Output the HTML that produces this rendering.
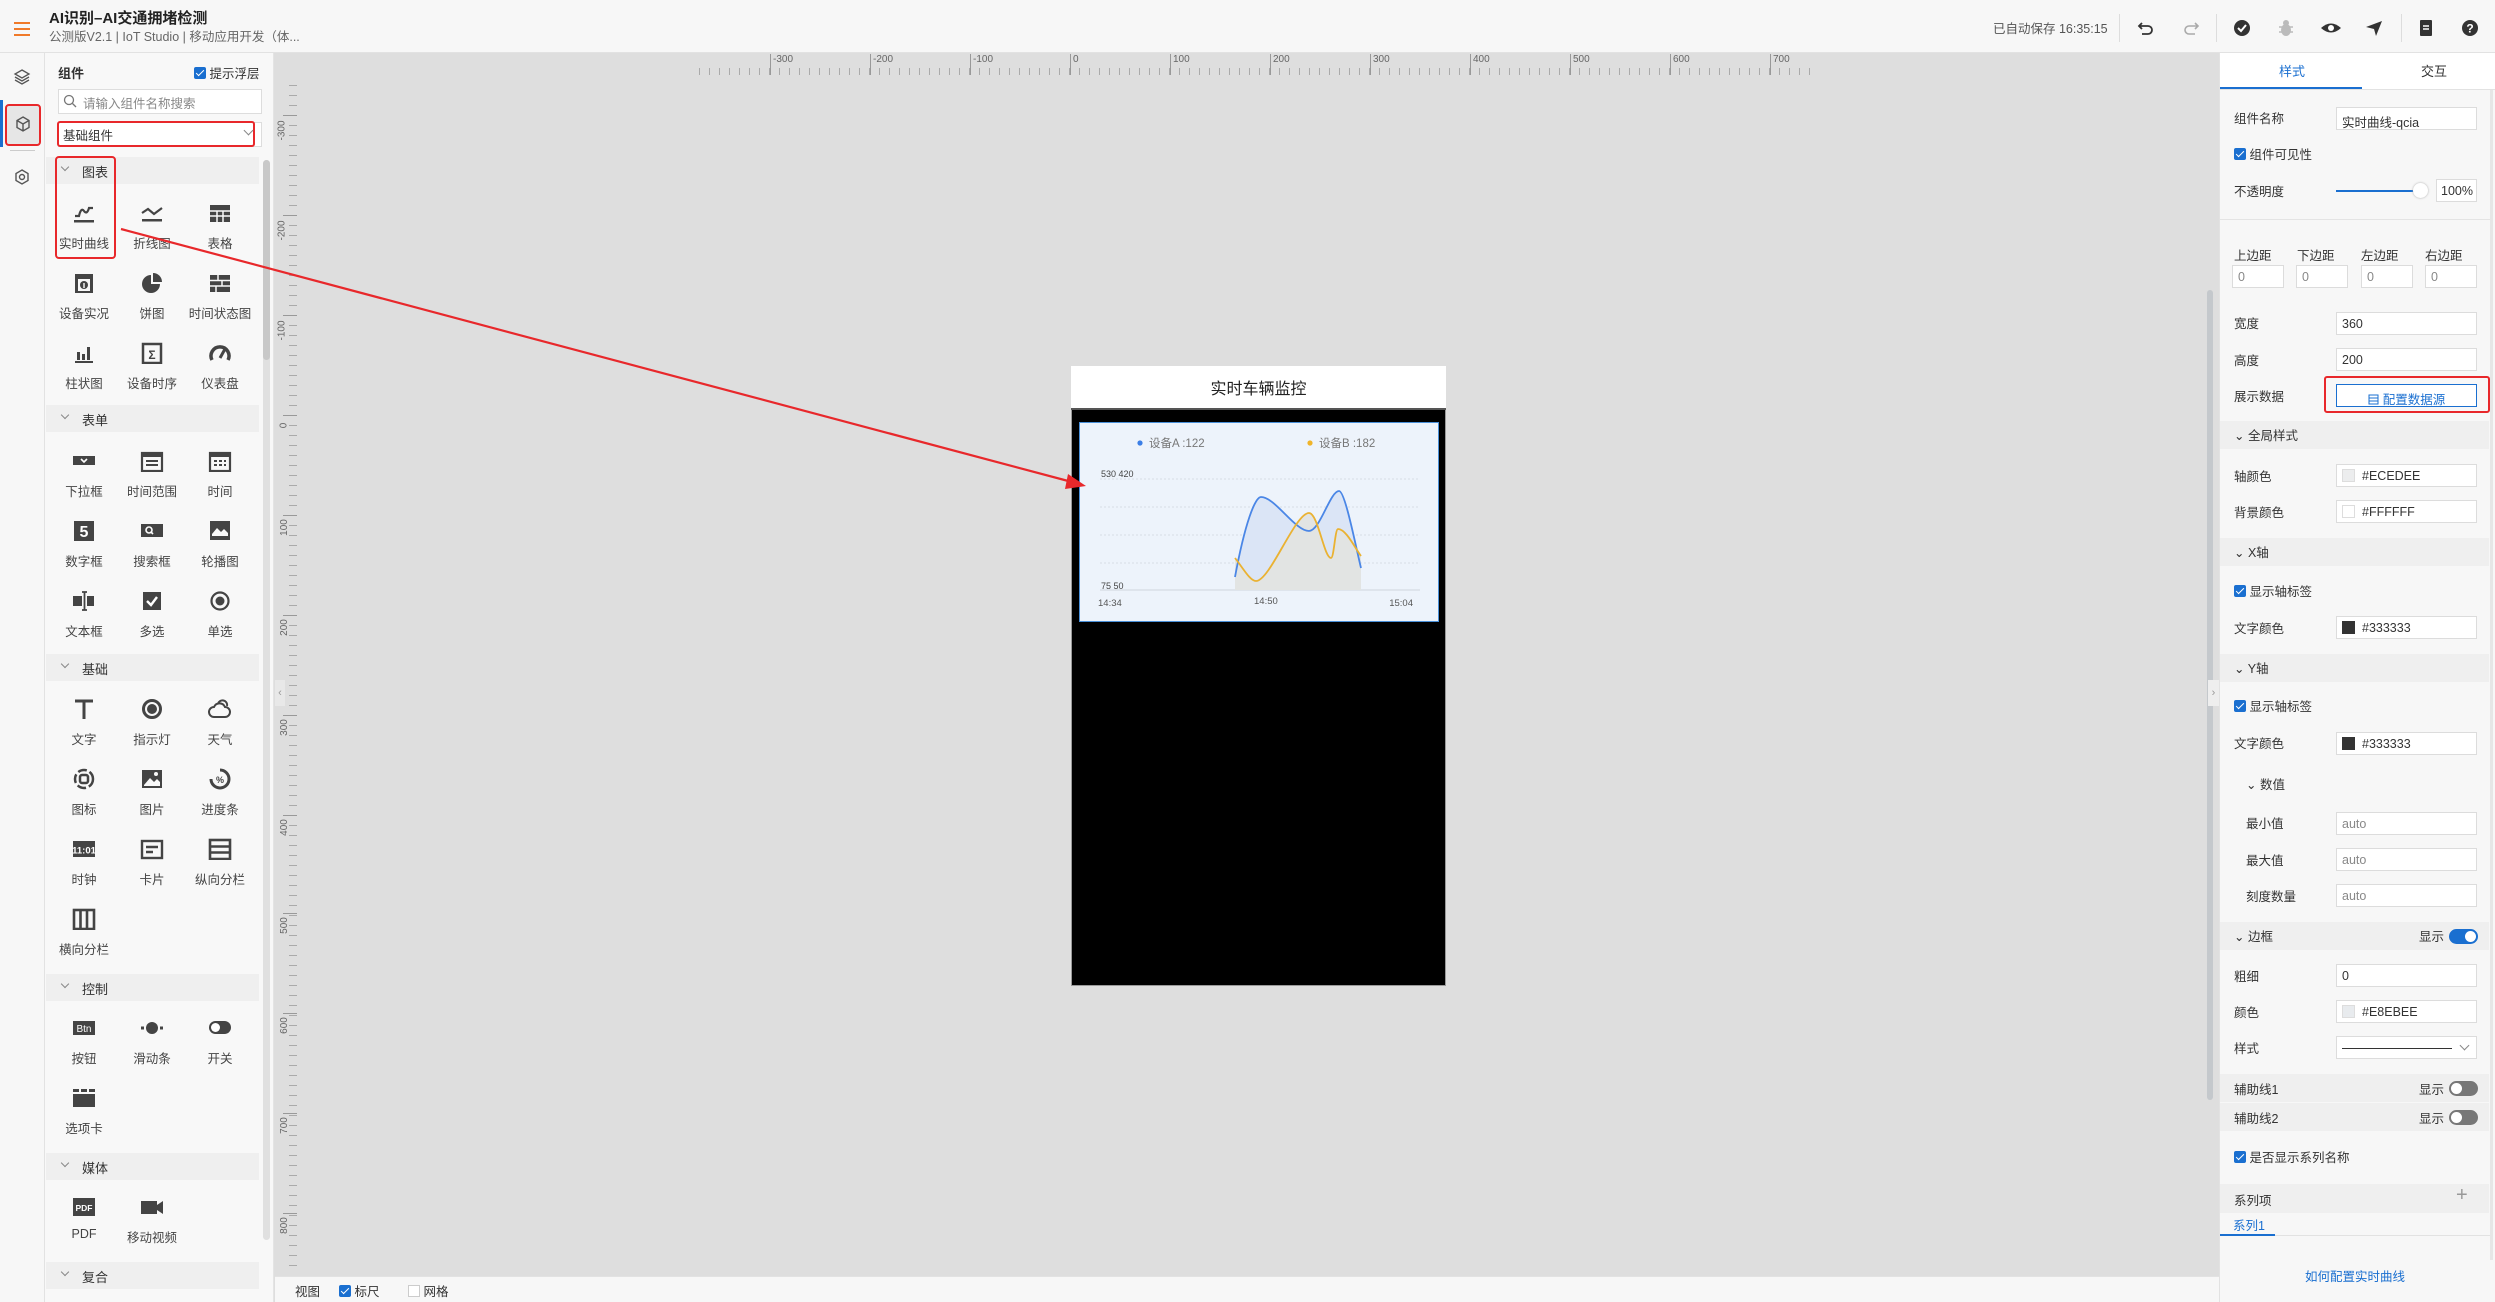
<!DOCTYPE html>
<html><head><meta charset="utf-8">
<style>
*{box-sizing:border-box;margin:0;padding:0}
body{width:2495px;height:1302px;overflow:hidden;background:#dedede;font-family:"Liberation Sans","Noto Sans CJK SC",sans-serif;color:#333;position:relative}
.a{position:absolute}
.t{position:absolute;white-space:nowrap}
.top{left:0;top:0;width:2495px;height:53px;background:#f7f7f7;border-bottom:1px solid #e2e2e2}
.rail{left:0;top:53px;width:45px;height:1249px;background:#f7f7f7;border-right:1px solid #e2e2e2}
.panel{left:45px;top:53px;width:229px;height:1249px;background:#f8f8f8;border-right:1px solid #e4e4e4}
.sec{left:46px;width:213px;height:27px;background:#efefef;font-size:13px;color:#333}
.sec span{position:absolute;left:36px;top:5px}
.chev{position:absolute;width:7px;height:7px;border-right:1px solid #888;border-bottom:1px solid #888;transform:rotate(45deg)}
.item{position:absolute;width:70px;text-align:center;font-size:12.5px;color:#444}
.item .ic{position:relative;height:28px;margin:0 auto 6px;display:flex;align-items:center;justify-content:center}
.right{left:2219px;top:53px;width:276px;height:1249px;background:#f7f7f7;border-left:1px solid #e2e2e2}
.lbl{position:absolute;left:2234px;font-size:12.5px;color:#333;white-space:nowrap;transform:translateY(-2px)}
.inp{position:absolute;left:2336px;width:141px;height:23px;background:#fff;border:1px solid #dcdcdc;font-size:12.5px;padding:4px 5px;color:#333;white-space:nowrap}
.rsec{position:absolute;left:2220px;width:269px;height:28px;background:#efefef;font-size:12.5px}
.cb{display:inline-block;width:12px;height:12px;background:#1a6fd0;border-radius:2px;position:relative;vertical-align:-1px}
.cb:after{content:"";position:absolute;left:4px;top:1px;width:3px;height:7px;border-right:1.6px solid #fff;border-bottom:1.6px solid #fff;transform:rotate(45deg)}
.sw{display:inline-block;width:13px;height:13px;vertical-align:-2px;margin-right:7px;border:1px solid #ddd}
.rl{font-size:10px;color:#666}
</style></head><body>

<div class="a top"></div>
<div class="a" style="left:14px;top:22px;width:16px;height:2px;background:#f07a2a"></div>
<div class="a" style="left:14px;top:28px;width:16px;height:2px;background:#f07a2a"></div>
<div class="a" style="left:14px;top:34px;width:16px;height:2px;background:#f07a2a"></div>
<div class="t" style="left:49px;top:7px;font-size:15px;font-weight:bold;color:#222">AI识别–AI交通拥堵检测</div>
<div class="t" style="left:49px;top:26px;font-size:12.5px;color:#666">公测版V2.1 | IoT Studio | 移动应用开发（体...</div>
<div class="t" style="left:1993px;top:18px;font-size:12.5px;color:#555">已自动保存 16:35:15</div>
<div class="a" style="left:2119px;top:14px;width:1px;height:28px;background:#ddd"></div>
<div class="a" style="left:2216px;top:14px;width:1px;height:28px;background:#ddd"></div>
<div class="a" style="left:2401px;top:14px;width:1px;height:28px;background:#ddd"></div>
<svg class="a" style="left:2136px;top:18px" width="20" height="20" viewBox="0 0 20 20"><path d="M6 5 L3 8 L6 11 M3 8 H12 a4 4 0 0 1 0 8 H6" fill="none" stroke="#333" stroke-width="1.8"/></svg>
<svg class="a" style="left:2181px;top:18px" width="20" height="20" viewBox="0 0 20 20"><path d="M14 5 L17 8 L14 11 M17 8 H8 a4 4 0 0 0 0 8 H14" fill="none" stroke="#aaa" stroke-width="1.6"/></svg>
<svg class="a" style="left:2232px;top:18px" width="20" height="20" viewBox="0 0 20 20"><circle cx="10" cy="10" r="8" fill="#333"/><path d="M6 10 L9 13 L14 7" fill="none" stroke="#fff" stroke-width="2"/></svg>
<svg class="a" style="left:2276px;top:18px" width="20" height="20" viewBox="0 0 20 20"><ellipse cx="10" cy="12" rx="5" ry="6" fill="#bbb"/><circle cx="10" cy="5" r="3" fill="#bbb"/><path d="M3 9h14M3 14h14" stroke="#bbb" stroke-width="1.5"/></svg>
<svg class="a" style="left:2320px;top:18px" width="22" height="20" viewBox="0 0 22 20"><path d="M1 10 Q11 1 21 10 Q11 19 1 10Z" fill="#333"/><circle cx="11" cy="10" r="3" fill="#fff"/></svg>
<svg class="a" style="left:2364px;top:18px" width="20" height="20" viewBox="0 0 20 20"><path d="M2 9 L18 3 L12 18 L10 11Z" fill="#333"/></svg>
<svg class="a" style="left:2416px;top:18px" width="20" height="20" viewBox="0 0 20 20"><rect x="4" y="2" width="12" height="16" rx="1" fill="#333"/><path d="M7 8h6M7 11h6" stroke="#fff" stroke-width="1.5"/></svg>
<svg class="a" style="left:2460px;top:18px" width="20" height="20" viewBox="0 0 20 20"><circle cx="10" cy="10" r="8" fill="#333"/><text x="10" y="14.5" text-anchor="middle" font-size="12" font-weight="bold" fill="#fff" font-family="Liberation Sans">?</text></svg>

<div class="a rail"></div>
<div class="a" style="left:0;top:100px;width:3px;height:47px;background:#1a6fd0"></div>
<div class="a" style="left:5px;top:104px;width:36px;height:42px;background:#e6e6e6;border:2px solid #e8282b;border-radius:4px"></div>
<div class="a" style="left:10px;top:150px;width:25px;height:1px;background:#ccc"></div>
<svg class="a" style="left:13px;top:68px" width="18" height="18" viewBox="0 0 18 18"><path d="M9 2 L16 6 L9 10 L2 6Z M2 9 L9 13 L16 9 M2 12 L9 16 L16 12" fill="none" stroke="#555" stroke-width="1.3"/></svg>
<svg class="a" style="left:14px;top:115px" width="18" height="18" viewBox="0 0 18 18"><path d="M9 2 L15 5.5 V12.5 L9 16 L3 12.5 V5.5Z M3 5.5 L9 9 L15 5.5 M9 9 V16" fill="none" stroke="#555" stroke-width="1.4"/></svg>
<svg class="a" style="left:13px;top:168px" width="18" height="18" viewBox="0 0 18 18"><path d="M9 2 L15 5.5 V12.5 L9 16 L3 12.5 V5.5Z" fill="none" stroke="#555" stroke-width="1.4"/><circle cx="9" cy="9" r="2.5" fill="none" stroke="#555" stroke-width="1.4"/></svg>

<div class="a panel"></div>
<div class="t" style="left:58px;top:63px;font-size:13px;font-weight:bold">组件</div>
<div class="t" style="left:194px;top:63px;font-size:12.5px"><span class="cb"></span> 提示浮层</div>
<div class="a" style="left:58px;top:89px;width:204px;height:25px;background:#fff;border:1px solid #ddd"></div>
<svg class="a" style="left:63px;top:94px" width="14" height="14" viewBox="0 0 14 14"><circle cx="6" cy="6" r="4.5" fill="none" stroke="#777" stroke-width="1.3"/><path d="M9.5 9.5 L13 13" stroke="#777" stroke-width="1.3"/></svg>
<div class="t" style="left:83px;top:93px;font-size:12.5px;color:#888">请输入组件名称搜索</div>
<div class="a" style="left:58px;top:122px;width:204px;height:25px;background:#fff;border:1px solid #ddd"></div>
<div class="a" style="left:57px;top:121px;width:198px;height:26px;border:2px solid #e8282b;border-radius:3px"></div>
<div class="t" style="left:63px;top:125px;font-size:12.5px">基础组件</div>
<div class="chev" style="left:245px;top:127px"></div>
<div class="a" style="left:263px;top:160px;width:7px;height:1080px;background:#e0e0e0;border-radius:4px"></div>
<div class="a" style="left:263px;top:160px;width:7px;height:200px;background:#c8c8c8;border-radius:4px"></div>

<div class="a sec" style="top:157px"><div class="chev" style="left:16px;top:7px;width:6px;height:6px"></div><span>图表</span></div>
<div class="a sec" style="top:405px"><div class="chev" style="left:16px;top:7px;width:6px;height:6px"></div><span>表单</span></div>
<div class="a sec" style="top:654px"><div class="chev" style="left:16px;top:7px;width:6px;height:6px"></div><span>基础</span></div>
<div class="a sec" style="top:974px"><div class="chev" style="left:16px;top:7px;width:6px;height:6px"></div><span>控制</span></div>
<div class="a sec" style="top:1153px"><div class="chev" style="left:16px;top:7px;width:6px;height:6px"></div><span>媒体</span></div>
<div class="a sec" style="top:1262px"><div class="chev" style="left:16px;top:7px;width:6px;height:6px"></div><span>复合</span></div>

<div class="a" style="left:55px;top:156px;width:61px;height:103px;border:2px solid #e8282b;border-radius:4px"></div>

<div class="item" style="left:49px;top:199px"><div class="ic"><svg width="24" height="22"><path d="M3 14 h4 q2 -9 5 -5 q3 4 5 -3 h4" fill="none" stroke="#444" stroke-width="2.2"/><rect x="2" y="18" width="20" height="2.5" fill="#444"/></svg></div>实时曲线</div>
<div class="item" style="left:117px;top:199px"><div class="ic"><svg width="24" height="22"><path d="M2 11 L8 7 L14 12 L22 6" fill="none" stroke="#444" stroke-width="2.2"/><rect x="2" y="17" width="20" height="2.5" fill="#444"/></svg></div>折线图</div>
<div class="item" style="left:185px;top:199px"><div class="ic"><svg width="24" height="22"><rect x="2" y="3" width="20" height="17" fill="#444"/><path d="M2 9h20M2 14h20M9 9v11M15 9v11" stroke="#f8f8f8" stroke-width="1.5"/></svg></div>表格</div>

<div class="item" style="left:49px;top:269px"><div class="ic"><svg width="24" height="22"><rect x="3" y="2" width="18" height="19" fill="#444"/><rect x="6" y="7" width="12" height="12" fill="#f8f8f8"/><circle cx="12" cy="13" r="4" fill="#444"/><rect x="11.3" y="11" width="1.4" height="5" fill="#fff"/></svg></div>设备实况</div>
<div class="item" style="left:117px;top:269px"><div class="ic"><svg width="24" height="22"><path d="M11 3 A9 9 0 1 0 20 12 H11Z" fill="#444"/><path d="M13 1 A9 9 0 0 1 22 10 H13Z" fill="#444"/></svg></div>饼图</div>
<div class="item" style="left:185px;top:269px"><div class="ic"><svg width="24" height="22"><rect x="2" y="3" width="20" height="17" fill="#444"/><path d="M2 8.5h20M2 14h20M10 3v5.5M14 8.5v5.5M8 14v6" stroke="#f8f8f8" stroke-width="1.5"/></svg></div>时间状态图</div>

<div class="item" style="left:49px;top:339px"><div class="ic"><svg width="24" height="22"><path d="M5 10h3v8h-3zM10 12h3v6h-3zM15 5h3v13h-3z" fill="#444"/><rect x="3" y="19" width="18" height="2" fill="#444"/></svg></div>柱状图</div>
<div class="item" style="left:117px;top:339px"><div class="ic"><svg width="24" height="22"><rect x="3" y="2" width="18" height="19" fill="none" stroke="#444" stroke-width="2.5"/><text x="12" y="17" text-anchor="middle" font-size="12" font-weight="bold" fill="#444">Σ</text></svg></div>设备时序</div>
<div class="item" style="left:185px;top:339px"><div class="ic"><svg width="24" height="22"><path d="M4 18 A9 9 0 1 1 20 18" fill="none" stroke="#444" stroke-width="3.5"/><path d="M12 16 L17 7" stroke="#444" stroke-width="3"/></svg></div>仪表盘</div>

<div class="item" style="left:49px;top:447px"><div class="ic"><svg width="24" height="22"><rect x="1" y="6" width="22" height="9" fill="#444"/><path d="M9 9 L12 12 L15 9" fill="none" stroke="#fff" stroke-width="1.6"/></svg></div>下拉框</div>
<div class="item" style="left:117px;top:447px"><div class="ic"><svg width="24" height="22"><rect x="2" y="3" width="20" height="18" fill="none" stroke="#444" stroke-width="2.2"/><rect x="2" y="3" width="20" height="4" fill="#444"/><path d="M6 11h12M6 15h12" stroke="#444" stroke-width="2"/></svg></div>时间范围</div>
<div class="item" style="left:185px;top:447px"><div class="ic"><svg width="24" height="22"><rect x="2" y="3" width="20" height="18" fill="none" stroke="#444" stroke-width="2.2"/><rect x="2" y="3" width="20" height="4" fill="#444"/><path d="M6 11h3M11 11h3M16 11h2M6 15h3M11 15h3M16 15h2" stroke="#444" stroke-width="2"/></svg></div>时间</div>

<div class="item" style="left:49px;top:517px"><div class="ic"><svg width="24" height="22"><rect x="2" y="1" width="20" height="20" fill="#444"/><text x="12" y="17" text-anchor="middle" font-size="16" font-weight="bold" fill="#fff" font-family="Liberation Sans">5</text></svg></div>数字框</div>
<div class="item" style="left:117px;top:517px"><div class="ic"><svg width="24" height="22"><rect x="1" y="4" width="22" height="13" fill="#444"/><circle cx="9" cy="10" r="3" fill="none" stroke="#fff" stroke-width="1.6"/><path d="M11 12l2 2" stroke="#fff" stroke-width="1.6"/></svg></div>搜索框</div>
<div class="item" style="left:185px;top:517px"><div class="ic"><svg width="24" height="22"><rect x="2" y="1" width="20" height="19" fill="#444"/><path d="M4 14 L9 8 L13 12 L16 9 L20 13 V16 H4Z" fill="#f8f8f8"/><path d="M8 18h2M11 18h2M14 18h2" stroke="#444" stroke-width="1.5"/></svg></div>轮播图</div>

<div class="item" style="left:49px;top:587px"><div class="ic"><svg width="24" height="22"><rect x="1" y="6" width="9" height="10" fill="#444"/><rect x="15" y="6" width="7" height="10" fill="#444"/><path d="M12.5 2v18M10 2h5M10 20h5" stroke="#444" stroke-width="1.8"/></svg></div>文本框</div>
<div class="item" style="left:117px;top:587px"><div class="ic"><svg width="24" height="22"><rect x="3" y="2" width="18" height="18" fill="#444"/><path d="M7 11 L11 15 L17 7" fill="none" stroke="#fff" stroke-width="2.4"/></svg></div>多选</div>
<div class="item" style="left:185px;top:587px"><div class="ic"><svg width="24" height="22"><circle cx="12" cy="11" r="8.5" fill="none" stroke="#444" stroke-width="2.2"/><circle cx="12" cy="11" r="4.5" fill="#444"/></svg></div>单选</div>

<div class="item" style="left:49px;top:695px"><div class="ic"><svg width="24" height="22"><path d="M3 3h18M12 3v18" stroke="#444" stroke-width="3"/></svg></div>文字</div>
<div class="item" style="left:117px;top:695px"><div class="ic"><svg width="24" height="22"><circle cx="12" cy="11" r="8.5" fill="none" stroke="#444" stroke-width="3"/><circle cx="12" cy="11" r="5" fill="#444"/></svg></div>指示灯</div>
<div class="item" style="left:185px;top:695px"><div class="ic"><svg width="24" height="22"><path d="M6 19 a5 5 0 0 1 0 -10 a6 6 0 0 1 11 0 a5 5 0 0 1 0 10Z M10 6 a4 4 0 0 1 9 2" fill="none" stroke="#444" stroke-width="2"/></svg></div>天气</div>

<div class="item" style="left:49px;top:765px"><div class="ic"><svg width="24" height="22"><circle cx="12" cy="11" r="9" fill="none" stroke="#444" stroke-width="2.5" stroke-dasharray="9 3"/><rect x="8" y="7" width="8" height="8" rx="2" fill="none" stroke="#444" stroke-width="2.5"/></svg></div>图标</div>
<div class="item" style="left:117px;top:765px"><div class="ic"><svg width="24" height="22"><rect x="2" y="2" width="20" height="18" fill="#444"/><path d="M4 17 L10 10 L14 14 L17 11 L20 14 V18 H4Z" fill="#f8f8f8"/><circle cx="16" cy="6" r="2" fill="#f8f8f8"/></svg></div>图片</div>
<div class="item" style="left:185px;top:765px"><div class="ic"><svg width="24" height="22"><path d="M12 2 A9 9 0 1 1 3 11" fill="none" stroke="#444" stroke-width="3"/><text x="12" y="15" text-anchor="middle" font-size="9" font-weight="bold" fill="#444">%</text></svg></div>进度条</div>

<div class="item" style="left:49px;top:835px"><div class="ic"><svg width="24" height="22"><rect x="1" y="3" width="22" height="16" fill="#444"/><text x="12" y="15.5" text-anchor="middle" font-size="9.5" font-weight="bold" fill="#fff" font-family="Liberation Sans">11:01</text></svg></div>时钟</div>
<div class="item" style="left:117px;top:835px"><div class="ic"><svg width="24" height="22"><rect x="2" y="3" width="20" height="17" fill="none" stroke="#444" stroke-width="2.4"/><path d="M6 9h12M6 14h7" stroke="#444" stroke-width="2.4"/></svg></div>卡片</div>
<div class="item" style="left:185px;top:835px"><div class="ic"><svg width="24" height="22"><rect x="2" y="2" width="20" height="19" fill="none" stroke="#444" stroke-width="2.6"/><path d="M2 8.5h20M2 14.5h20" stroke="#444" stroke-width="2.6"/></svg></div>纵向分栏</div>

<div class="item" style="left:49px;top:905px"><div class="ic"><svg width="24" height="22"><rect x="2" y="2" width="20" height="19" fill="none" stroke="#444" stroke-width="2.6"/><path d="M8.5 2v19M15 2v19" stroke="#444" stroke-width="2.6"/></svg></div>横向分栏</div>

<div class="item" style="left:49px;top:1014px"><div class="ic"><svg width="24" height="22"><rect x="1" y="4" width="22" height="14" fill="#444"/><text x="12" y="15" text-anchor="middle" font-size="10" fill="#fff" font-family="Liberation Sans">Btn</text></svg></div>按钮</div>
<div class="item" style="left:117px;top:1014px"><div class="ic"><svg width="24" height="22"><circle cx="12" cy="11" r="6" fill="#444"/><rect x="1" y="9.5" width="3" height="3" fill="#444"/><rect x="20" y="9.5" width="3" height="3" fill="#444"/></svg></div>滑动条</div>
<div class="item" style="left:185px;top:1014px"><div class="ic"><svg width="24" height="22"><rect x="1" y="4" width="22" height="13" rx="6.5" fill="#444"/><circle cx="7.5" cy="10.5" r="4.5" fill="#fff"/></svg></div>开关</div>

<div class="item" style="left:49px;top:1084px"><div class="ic"><svg width="24" height="22"><rect x="1" y="7" width="22" height="13" fill="#444"/><rect x="1" y="2" width="6" height="3" fill="#444"/><rect x="9" y="2" width="6" height="3" fill="#444"/><rect x="17" y="2" width="6" height="3" fill="#444"/></svg></div>选项卡</div>

<div class="item" style="left:49px;top:1193px"><div class="ic"><svg width="24" height="22"><rect x="1" y="2" width="22" height="18" fill="#444"/><text x="12" y="15" text-anchor="middle" font-size="8.5" font-weight="bold" fill="#fff" font-family="Liberation Sans">PDF</text></svg></div>PDF</div>
<div class="item" style="left:117px;top:1193px"><div class="ic"><svg width="24" height="22"><rect x="1" y="5" width="16" height="13" fill="#444"/><path d="M17 9 L23 5 V18 L17 14Z" fill="#444"/></svg></div>移动视频</div>

<div class="a" style="left:274px;top:53px;width:1945px;height:1222px;background:#dedede"></div>
<div class="a" style="left:699px;top:68px;width:1115px;height:7px;background:repeating-linear-gradient(90deg,#aaa 0 1px,transparent 1px 10px)"></div>
<div class="a" style="left:289px;top:81px;width:8px;height:1190px;background:repeating-linear-gradient(180deg,#aaa 0 1px,transparent 1px 10px);background-position:0 4px"></div>
<div class="a" style="left:770px;top:54px;width:1px;height:21px;background:#999"></div><div class="t rl" style="left:773px;top:54px">-300</div>
<div class="a" style="left:870px;top:54px;width:1px;height:21px;background:#999"></div><div class="t rl" style="left:873px;top:54px">-200</div>
<div class="a" style="left:970px;top:54px;width:1px;height:21px;background:#999"></div><div class="t rl" style="left:973px;top:54px">-100</div>
<div class="a" style="left:1070px;top:54px;width:1px;height:21px;background:#999"></div><div class="t rl" style="left:1073px;top:54px">0</div>
<div class="a" style="left:1170px;top:54px;width:1px;height:21px;background:#999"></div><div class="t rl" style="left:1173px;top:54px">100</div>
<div class="a" style="left:1270px;top:54px;width:1px;height:21px;background:#999"></div><div class="t rl" style="left:1273px;top:54px">200</div>
<div class="a" style="left:1370px;top:54px;width:1px;height:21px;background:#999"></div><div class="t rl" style="left:1373px;top:54px">300</div>
<div class="a" style="left:1470px;top:54px;width:1px;height:21px;background:#999"></div><div class="t rl" style="left:1473px;top:54px">400</div>
<div class="a" style="left:1570px;top:54px;width:1px;height:21px;background:#999"></div><div class="t rl" style="left:1573px;top:54px">500</div>
<div class="a" style="left:1670px;top:54px;width:1px;height:21px;background:#999"></div><div class="t rl" style="left:1673px;top:54px">600</div>
<div class="a" style="left:1770px;top:54px;width:1px;height:21px;background:#999"></div><div class="t rl" style="left:1773px;top:54px">700</div>
<div class="a" style="left:283px;top:115px;width:14px;height:1px;background:#999"></div><div class="t rl" style="left:272px;top:125px;transform:rotate(-90deg)">-300</div>
<div class="a" style="left:283px;top:215px;width:14px;height:1px;background:#999"></div><div class="t rl" style="left:272px;top:225px;transform:rotate(-90deg)">-200</div>
<div class="a" style="left:283px;top:315px;width:14px;height:1px;background:#999"></div><div class="t rl" style="left:272px;top:325px;transform:rotate(-90deg)">-100</div>
<div class="a" style="left:283px;top:415px;width:14px;height:1px;background:#999"></div><div class="t rl" style="left:281px;top:420px;transform:rotate(-90deg)">0</div>
<div class="a" style="left:283px;top:515px;width:14px;height:1px;background:#999"></div><div class="t rl" style="left:276px;top:522px;transform:rotate(-90deg)">100</div>
<div class="a" style="left:283px;top:615px;width:14px;height:1px;background:#999"></div><div class="t rl" style="left:276px;top:622px;transform:rotate(-90deg)">200</div>
<div class="a" style="left:283px;top:715px;width:14px;height:1px;background:#999"></div><div class="t rl" style="left:276px;top:722px;transform:rotate(-90deg)">300</div>
<div class="a" style="left:283px;top:815px;width:14px;height:1px;background:#999"></div><div class="t rl" style="left:276px;top:822px;transform:rotate(-90deg)">400</div>
<div class="a" style="left:283px;top:913px;width:14px;height:1px;background:#999"></div><div class="t rl" style="left:276px;top:920px;transform:rotate(-90deg)">500</div>
<div class="a" style="left:283px;top:1013px;width:14px;height:1px;background:#999"></div><div class="t rl" style="left:276px;top:1020px;transform:rotate(-90deg)">600</div>
<div class="a" style="left:283px;top:1113px;width:14px;height:1px;background:#999"></div><div class="t rl" style="left:276px;top:1120px;transform:rotate(-90deg)">700</div>
<div class="a" style="left:283px;top:1213px;width:14px;height:1px;background:#999"></div><div class="t rl" style="left:276px;top:1220px;transform:rotate(-90deg)">800</div>
<div class="a" style="left:275px;top:680px;width:10px;height:26px;background:#e8e8e8;color:#999;font-size:11px;text-align:center;line-height:26px">‹</div>
<div class="a" style="left:2207px;top:290px;width:6px;height:810px;background:#c4c8cc;border-radius:3px"></div>
<div class="a" style="left:2208px;top:680px;width:11px;height:26px;background:#eee;color:#999;font-size:11px;text-align:center;line-height:26px">›</div>

<div class="a" style="left:275px;top:1276px;width:1944px;height:26px;background:#f7f7f7;border-top:1px solid #e2e2e2"></div>
<div class="t" style="left:295px;top:1281px;font-size:12.5px">视图</div>
<div class="t" style="left:339px;top:1281px;font-size:12.5px"><span class="cb"></span> 标尺</div>
<div class="t" style="left:408px;top:1281px;font-size:12.5px"><span style="display:inline-block;width:12px;height:12px;border:1px solid #ccc;background:#fff;vertical-align:-1px"></span> 网格</div>

<div class="a" style="left:1071px;top:366px;width:375px;height:620px;background:#000;border:1px solid #999"></div>
<div class="a" style="left:1071px;top:366px;width:375px;height:44px;background:#fff;border-bottom:2px solid #555"></div>
<div class="t" style="left:1071px;top:375px;width:375px;text-align:center;font-size:16px;color:#222">实时车辆监控</div>
<div class="a" style="left:1079px;top:422px;width:360px;height:200px;background:#edf3fb;border:1.5px solid #4a90d9">
<svg width="357" height="197" style="position:absolute;left:0;top:0">
<circle cx="60" cy="20" r="2.6" fill="#3b7ee6"/>
<text x="69" y="24" font-size="11.5" fill="#777" font-family="Liberation Sans,Noto Sans CJK SC">设备A :122</text>
<circle cx="230" cy="20" r="2.6" fill="#f0b429"/>
<text x="239" y="24" font-size="11.5" fill="#777" font-family="Liberation Sans,Noto Sans CJK SC">设备B :182</text>
<text x="21" y="54" font-size="9" fill="#444" font-family="Liberation Sans">530  420</text>
<text x="21" y="166" font-size="9" fill="#444" font-family="Liberation Sans">75  50</text>
<g stroke="#d6dde6" stroke-dasharray="2 2" stroke-width="1"><path d="M20 56H340M20 84H340M20 112H340M20 140H340"/></g>
<path d="M20 167H340" stroke="#d0d6de"/>
<path d="M155,154 C165,100 175,74 181,74 C195,74 215,108 229,108 C240,108 250,68 259,68 C265,68 275,120 281,145 L281,167 L155,167Z" fill="#dbe5f6"/>
<path d="M155,135 C163,145 170,158 176,158 C190,158 215,90 229,90 C238,90 244,135 251,135 C254,135 255,106 258,106 C266,106 275,125 281,133 L281,167 L155,167Z" fill="#e2e4e3"/>
<path d="M155,154 C165,100 175,74 181,74 C195,74 215,108 229,108 C240,108 250,68 259,68 C265,68 275,120 281,145" fill="none" stroke="#4a86e6" stroke-width="1.8"/>
<path d="M155,135 C163,145 170,158 176,158 C190,158 215,90 229,90 C238,90 244,135 251,135 C254,135 255,106 258,106 C266,106 275,125 281,133" fill="none" stroke="#eab232" stroke-width="1.8"/>
<text x="18" y="183" font-size="9.5" fill="#555" font-family="Liberation Sans">14:34</text>
<text x="174" y="181" font-size="9.5" fill="#555" font-family="Liberation Sans">14:50</text>
<text x="333" y="183" font-size="9.5" fill="#555" text-anchor="end" font-family="Liberation Sans">15:04</text>
</svg>
</div>

<svg class="a" style="left:0;top:0" width="1200" height="600"><line x1="121" y1="229" x2="1072" y2="482" stroke="#e8282b" stroke-width="2.2"/><path d="M1086 486 L1068 474 L1065 489Z" fill="#e8282b"/></svg>

<div class="a right"></div>
<div class="a" style="left:2220px;top:53px;width:275px;height:37px;background:#fff;border-bottom:1px solid #e2e2e2"></div>
<div class="t" style="left:2279px;top:61px;font-size:13px;color:#1a6fd0">样式</div>
<div class="t" style="left:2421px;top:61px;font-size:13px;color:#333">交互</div>
<div class="a" style="left:2220px;top:87px;width:142px;height:2px;background:#1a6fd0"></div>
<div class="a" style="left:2490px;top:90px;width:3px;height:1170px;background:#e6e6e6"></div>

<div class="lbl" style="top:110px">组件名称</div><div class="inp" style="top:107px">实时曲线-qcia</div>
<div class="lbl" style="top:146px"><span class="cb"></span> 组件可见性</div>
<div class="lbl" style="top:183px">不透明度</div>
<div class="a" style="left:2336px;top:190px;width:84px;height:2px;background:#1a6fd0"></div>
<div class="a" style="left:2413px;top:183px;width:15px;height:15px;border-radius:50%;background:#fff;box-shadow:0 0 2px #aaa"></div>
<div class="inp" style="left:2436px;top:179px;width:41px;text-align:right;padding:4px 3px">100%</div>
<div class="a" style="left:2220px;top:219px;width:270px;height:1px;background:#e4e4e4"></div>
<div class="lbl" style="top:247px">上边距</div><div class="lbl" style="left:2297px;top:247px">下边距</div><div class="lbl" style="left:2361px;top:247px">左边距</div><div class="lbl" style="left:2425px;top:247px">右边距</div>
<div class="inp" style="left:2232px;top:265px;width:52px;color:#888">0</div><div class="inp" style="left:2296px;top:265px;width:52px;color:#888">0</div><div class="inp" style="left:2361px;top:265px;width:52px;color:#888">0</div><div class="inp" style="left:2425px;top:265px;width:52px;color:#888">0</div>
<div class="lbl" style="top:315px">宽度</div><div class="inp" style="top:312px">360</div>
<div class="lbl" style="top:352px">高度</div><div class="inp" style="top:348px">200</div>
<div class="lbl" style="top:388px">展示数据</div>
<div class="inp" style="top:384px;border-color:#1a6fd0;color:#1a6fd0;text-align:center"><svg width="11" height="11" style="vertical-align:-1px;margin-right:4px"><rect x="1" y="1" width="9" height="9" fill="none" stroke="#1a6fd0"/><path d="M1 4h9M1 7h9" stroke="#1a6fd0"/></svg>配置数据源</div>
<div class="a" style="left:2324px;top:376px;width:166px;height:37px;border:2px solid #e8282b;border-radius:3px"></div>

<div class="rsec" style="top:421px"><span class="t" style="left:14px;top:4px">⌄ 全局样式</span></div>
<div class="lbl" style="top:468px">轴颜色</div><div class="inp" style="top:464px"><span class="sw" style="background:#ecedee"></span>#ECEDEE</div>
<div class="lbl" style="top:504px">背景颜色</div><div class="inp" style="top:500px"><span class="sw" style="background:#fff"></span>#FFFFFF</div>
<div class="rsec" style="top:538px"><span class="t" style="left:14px;top:4px">⌄ X轴</span></div>
<div class="lbl" style="top:583px"><span class="cb"></span> 显示轴标签</div>
<div class="lbl" style="top:620px">文字颜色</div><div class="inp" style="top:616px"><span class="sw" style="background:#333;border-color:#333"></span>#333333</div>
<div class="rsec" style="top:654px"><span class="t" style="left:14px;top:4px">⌄ Y轴</span></div>
<div class="lbl" style="top:698px"><span class="cb"></span> 显示轴标签</div>
<div class="lbl" style="top:735px">文字颜色</div><div class="inp" style="top:732px"><span class="sw" style="background:#333;border-color:#333"></span>#333333</div>
<div class="lbl" style="left:2246px;top:776px">⌄ 数值</div>
<div class="lbl" style="left:2246px;top:815px">最小值</div><div class="inp" style="top:812px;color:#888">auto</div>
<div class="lbl" style="left:2246px;top:852px">最大值</div><div class="inp" style="top:848px;color:#888">auto</div>
<div class="lbl" style="left:2246px;top:888px">刻度数量</div><div class="inp" style="top:884px;color:#888">auto</div>
<div class="rsec" style="top:922px"><span class="t" style="left:14px;top:4px">⌄ 边框</span><span class="t" style="left:199px;top:4px">显示</span><span class="a" style="left:229px;top:7px;width:29px;height:15px;border-radius:8px;background:#1a6fd0"></span><span class="a" style="left:245px;top:9px;width:11px;height:11px;border-radius:50%;background:#fff"></span></div>
<div class="lbl" style="top:968px">粗细</div><div class="inp" style="top:964px">0</div>
<div class="lbl" style="top:1004px">颜色</div><div class="inp" style="top:1000px"><span class="sw" style="background:#e8ebee"></span>#E8EBEE</div>
<div class="lbl" style="top:1040px">样式</div><div class="inp" style="top:1036px"><span class="a" style="left:5px;top:11px;width:110px;height:1px;background:#333"></span><span class="chev" style="left:124px;top:5px"></span></div>
<div class="rsec" style="top:1074px;height:28px"><span class="t" style="left:14px;top:5px">辅助线1</span><span class="t" style="left:199px;top:5px">显示</span><span class="a" style="left:229px;top:7px;width:29px;height:15px;border-radius:8px;background:#777"></span><span class="a" style="left:231px;top:9px;width:11px;height:11px;border-radius:50%;background:#fff"></span></div>
<div class="rsec" style="top:1103px;height:28px"><span class="t" style="left:14px;top:5px">辅助线2</span><span class="t" style="left:199px;top:5px">显示</span><span class="a" style="left:229px;top:7px;width:29px;height:15px;border-radius:8px;background:#777"></span><span class="a" style="left:231px;top:9px;width:11px;height:11px;border-radius:50%;background:#fff"></span></div>
<div class="lbl" style="top:1149px"><span class="cb"></span> 是否显示系列名称</div>
<div class="rsec" style="top:1184px;height:29px"><span class="t" style="left:14px;top:6px">系列项</span><span class="t" style="left:236px;top:0px;font-size:20px;color:#999">+</span></div>
<div class="t" style="left:2233px;top:1215px;font-size:12.5px;color:#1a6fd0">系列1</div>
<div class="a" style="left:2220px;top:1234px;width:55px;height:2px;background:#1a6fd0"></div>
<div class="a" style="left:2275px;top:1235px;width:215px;height:1px;background:#e2e2e2"></div>
<div class="t" style="left:2220px;top:1266px;width:270px;text-align:center;font-size:12.5px;color:#1a6fd0">如何配置实时曲线</div>
</body></html>
